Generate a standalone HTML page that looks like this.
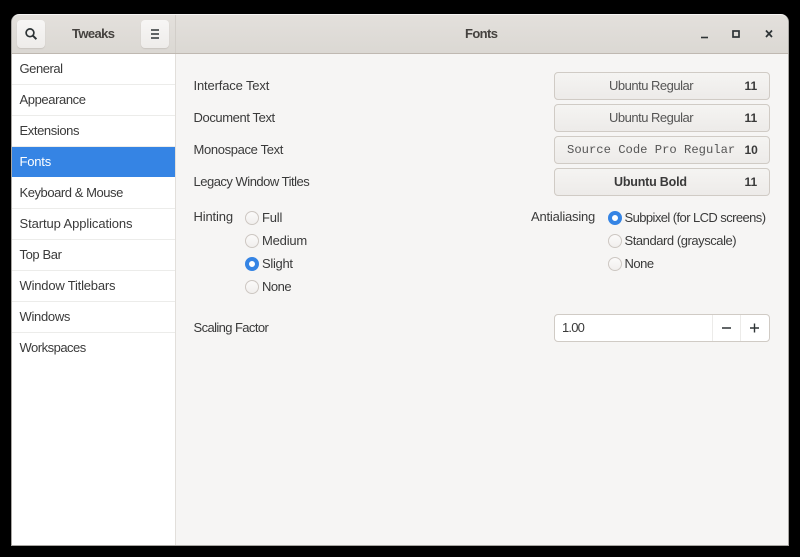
<!DOCTYPE html>
<html><head><meta charset="utf-8"><style>
*{box-sizing:border-box}
html,body{margin:0;padding:0;width:800px;height:557px;overflow:hidden;background:#000}
body{position:relative;font-family:"Liberation Sans",sans-serif;font-size:13px;color:#3d3846}
.a{position:absolute}
.t{position:absolute;white-space:nowrap;line-height:16px;height:16px;color:#3a3a3a}
#win{left:11px;top:14px;width:778px;height:532px;background:#f6f5f4;border-radius:8px 8px 0 0;overflow:hidden;border:1px solid #a8a6a2;border-top:0}
#hb{left:12px;top:15px;width:776px;height:39px;background:linear-gradient(#e3e0dc,#dbd8d3);border-bottom:1px solid #bfb8b1;border-radius:7px 7px 0 0}
#side{left:12px;top:54px;width:164px;height:491px;background:#fff;border-right:1px solid #e2dfdb}
.row{position:absolute;left:12px;width:163px;height:1px;background:#ececea}
.btn{position:absolute;background:linear-gradient(#f5f4f2,#edebe9);border:1px solid #d0cbc5;border-radius:4px}
.hbtn{position:absolute;top:20px;width:28px;height:28px;background:linear-gradient(#f7f6f5,#eeecea);border-radius:4px;box-shadow:0 1px 1px #c9c5c0}
.r{position:absolute;width:14px;height:14px;border-radius:50%;background:linear-gradient(#fbfafa,#f1efed);border:1px solid #cdc7c2}
.r.on{background:#fff;border:4px solid #3584e4}
</style></head><body>
<div class="a" id="win"></div>
<div class="a" id="hb"></div>
<div class="a" style="left:175px;top:15px;width:1px;height:38px;background:#d2cec9"></div>
<div class="a" id="side"></div>
<div class="row" style="top:84px"></div><div class="row" style="top:115px"></div>
<div class="row" style="top:208px"></div><div class="row" style="top:239px"></div>
<div class="row" style="top:270px"></div><div class="row" style="top:301px"></div>
<div class="row" style="top:332px"></div>
<div class="a" style="left:12px;top:147px;width:163px;height:30px;background:#3584e4"></div>
<div class="row" style="top:146px"></div>

<div class="hbtn" style="left:17px"></div>
<svg class="a" style="left:24px;top:27px" width="14" height="14" viewBox="0 0 14 14"><circle cx="6" cy="5.8" r="3.9" fill="none" stroke="#2e3436" stroke-width="1.7"/><path d="M8.8 8.6L12.4 12.2" stroke="#2e3436" stroke-width="2"/></svg>
<div class="t" style="left:72px;top:26px;font-weight:bold;font-size:13px;letter-spacing:-.6px;color:#45423f">Tweaks</div>
<div class="hbtn" style="left:141px"></div>
<svg class="a" style="left:151px;top:29px" width="9" height="10" viewBox="0 0 9 10"><path d="M0 1h8M0 5h8M0 9h8" stroke="#2e3436" stroke-width="1.5"/></svg>
<div class="t" style="left:465px;top:26px;font-weight:bold;letter-spacing:-.6px;color:#45423f">Fonts</div>
<svg class="a" style="left:696px;top:26px" width="84" height="16" viewBox="0 0 84 16"><path d="M5 11.500h7" stroke="#2e3436" stroke-width="1.600"/><rect x="37" y="5" width="6" height="6" fill="none" stroke="#2e3436" stroke-width="1.700"/><path d="M70 4.500l6 6.500M76 4.500l-6 6.500" stroke="#2e3436" stroke-width="1.700"/></svg>

<div class="t" style="left:19.5px;top:61px;letter-spacing:-.45px">General</div>
<div class="t" style="left:19.5px;top:92px;letter-spacing:-.4px">Appearance</div>
<div class="t" style="left:19.5px;top:123px;letter-spacing:-.4px">Extensions</div>
<div class="t" style="left:19.5px;top:154px;color:#fff;letter-spacing:-.2px">Fonts</div>
<div class="t" style="left:19.5px;top:185px;letter-spacing:-.45px">Keyboard &amp; Mouse</div>
<div class="t" style="left:19.5px;top:216px;letter-spacing:-.1px">Startup Applications</div>
<div class="t" style="left:19.5px;top:247px;letter-spacing:-.4px">Top Bar</div>
<div class="t" style="left:19.5px;top:278px;letter-spacing:-.2px">Window Titlebars</div>
<div class="t" style="left:19.5px;top:309px;letter-spacing:-.3px">Windows</div>
<div class="t" style="left:19.5px;top:340px;letter-spacing:-.5px">Workspaces</div>

<div class="t" style="left:193.5px;top:78px;letter-spacing:-.15px">Interface Text</div>
<div class="t" style="left:193.5px;top:110px;letter-spacing:-.4px">Document Text</div>
<div class="t" style="left:193.5px;top:142px;letter-spacing:-.35px">Monospace Text</div>
<div class="t" style="left:193.5px;top:174px;letter-spacing:-.5px">Legacy Window Titles</div>

<div class="btn" style="left:554px;top:72px;width:216px;height:28px"></div>
<div class="btn" style="left:554px;top:104px;width:216px;height:28px"></div>
<div class="btn" style="left:554px;top:136px;width:216px;height:28px"></div>
<div class="btn" style="left:554px;top:168px;width:216px;height:28px"></div>
<div class="t" style="left:609px;top:78px;color:#555;letter-spacing:-.5px">Ubuntu Regular</div><div class="t" style="left:744.5px;top:78px;font-weight:bold;font-size:12px">11</div>
<div class="t" style="left:609px;top:110px;color:#555;letter-spacing:-.5px">Ubuntu Regular</div><div class="t" style="left:744.5px;top:110px;font-weight:bold;font-size:12px">11</div>
<div class="t" style="left:567px;top:142px;color:#555;font-family:'Liberation Mono',monospace;font-size:12.2px">Source Code Pro Regular</div><div class="t" style="left:744.5px;top:142px;font-weight:bold;font-size:12px">10</div>
<div class="t" style="left:614px;top:174px;font-weight:bold;font-size:12.5px;letter-spacing:-.2px">Ubuntu Bold</div><div class="t" style="left:744.5px;top:174px;font-weight:bold;font-size:12px">11</div>

<div class="t" style="left:193.5px;top:209px;letter-spacing:-.15px">Hinting</div>
<div class="r" style="left:245px;top:211px"></div><div class="t" style="left:262px;top:210px;letter-spacing:-.2px">Full</div>
<div class="r" style="left:245px;top:234px"></div><div class="t" style="left:262px;top:233px;letter-spacing:-.2px">Medium</div>
<div class="r on" style="left:245px;top:257px"></div><div class="t" style="left:262px;top:256px;letter-spacing:-.3px">Slight</div>
<div class="r" style="left:245px;top:280px"></div><div class="t" style="left:262px;top:279px;letter-spacing:-.5px">None</div>

<div class="t" style="left:531px;top:209px;letter-spacing:-.2px">Antialiasing</div>
<div class="r on" style="left:608px;top:211px"></div><div class="t" style="left:624.5px;top:210px;letter-spacing:-.58px">Subpixel (for LCD screens)</div>
<div class="r" style="left:608px;top:234px"></div><div class="t" style="left:624.5px;top:233px;letter-spacing:-.45px">Standard (grayscale)</div>
<div class="r" style="left:608px;top:257px"></div><div class="t" style="left:624.5px;top:256px;letter-spacing:-.5px">None</div>

<div class="t" style="left:193.5px;top:320px;letter-spacing:-.6px">Scaling Factor</div>
<div class="a" style="left:554px;top:314px;width:216px;height:28px;background:#fff;border:1px solid #d0cbc5;border-radius:4px"></div>
<div class="a" style="left:712px;top:315px;width:1px;height:26px;background:#ecebe9"></div>
<div class="a" style="left:740px;top:315px;width:1px;height:26px;background:#ecebe9"></div>
<div class="t" style="left:562px;top:320px;letter-spacing:-.8px">1.00</div>
<svg class="a" style="left:721px;top:322px" width="42" height="12" viewBox="0 0 42 12"><path d="M1 6h9M29 6h9M33.500 1.500v9" stroke="#2e3436" stroke-width="1.400"/></svg>
</body></html>
